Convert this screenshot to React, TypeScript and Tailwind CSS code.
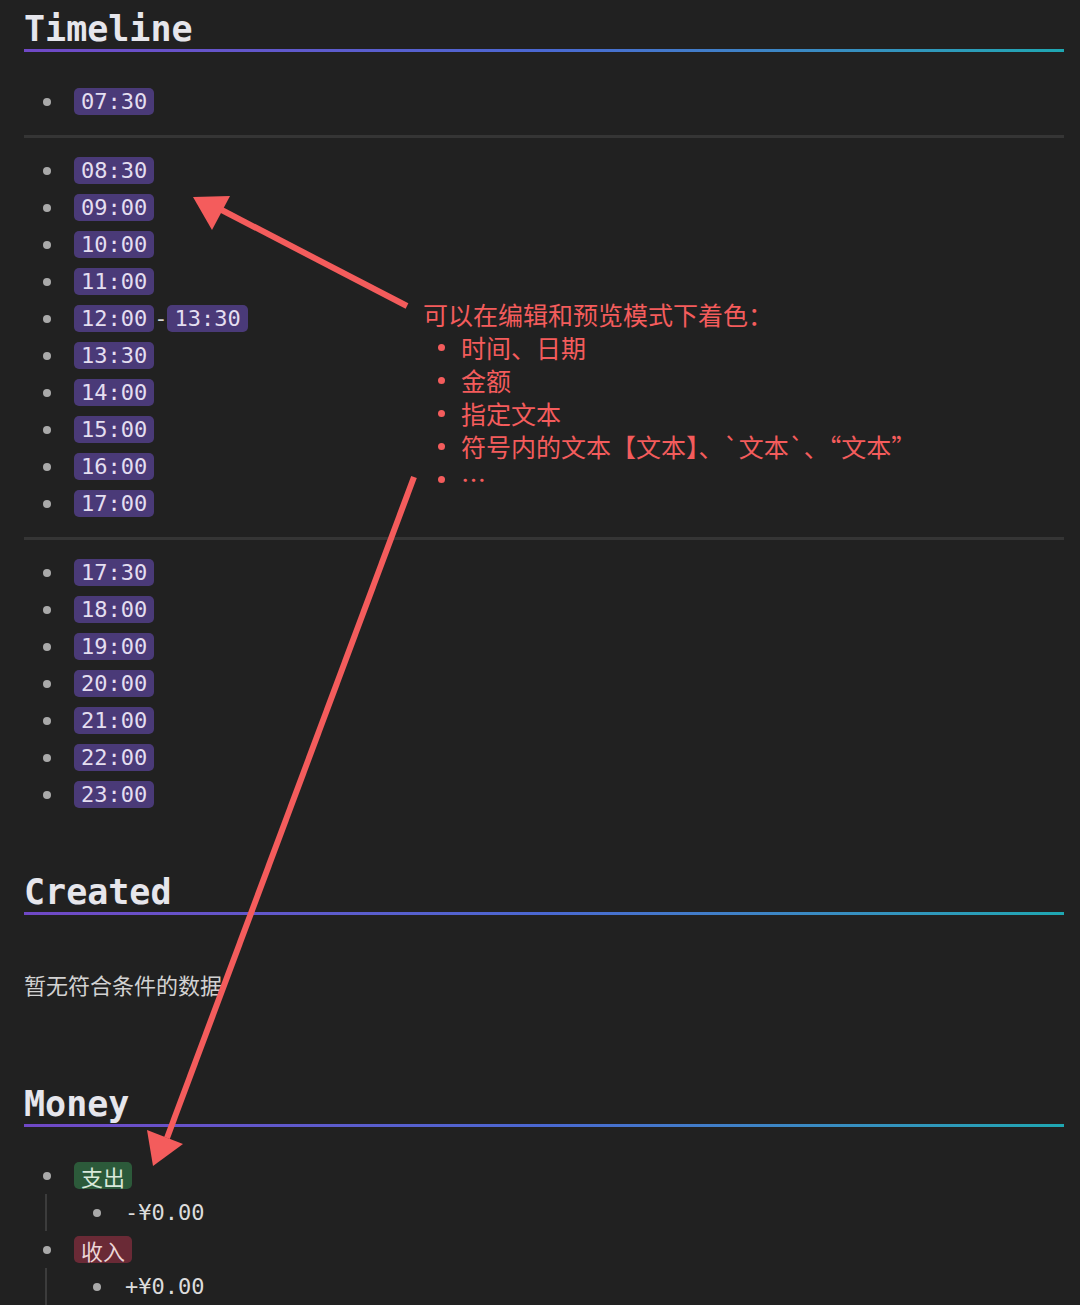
import React from "react";

const mono = { fontFamily: '"DejaVu Sans Mono", "Liberation Mono", "Noto Sans CJK SC", monospace' };
const cjk = { fontFamily: '"Noto Sans CJK SC", "Noto Sans", sans-serif' };

function Heading({ text }: { text: string }) {
  return (
    <div className="pt-[9px]">
      <div className="text-[35px] leading-[40px] font-bold text-[#e6e6ec]" style={mono}>
        {text}
      </div>
      <div className="h-[3px] w-full bg-linear-to-r from-[#7048c6] via-[#4a68d2] to-[#1ea7b2]" />
    </div>
  );
}

function Dot() {
  return <span className="ml-[19px] mr-[23px] h-2 w-2 shrink-0 rounded-full bg-[#a9a9a9]" />;
}

function Badge({ children, cls }: { children: React.ReactNode; cls: string }) {
  return (
    <span
      className={"inline-flex h-[27px] items-center rounded-[5px] px-[7px] text-[22px] leading-none " + cls}
      style={mono}
    >
      {children}
    </span>
  );
}

function TimeRow({ t, t2 }: { t: string; t2?: string }) {
  return (
    <div className="flex h-[37px] items-center">
      <Dot />
      <Badge cls="bg-[#4a3a78] text-[#e4def0]">{t}</Badge>
      {t2 && (
        <>
          <span className="text-[22px] leading-none text-[#d6d6d6]" style={mono}>-</span>
          <Badge cls="bg-[#4a3a78] text-[#e4def0]">{t2}</Badge>
        </>
      )}
    </div>
  );
}

function Hr() {
  return <div className="mt-[15px] mb-[14px] h-[3px] w-full bg-[#353535]" />;
}

export default function App() {
  const group2 = ["08:30", "09:00", "10:00", "11:00"];
  const group2b = ["13:30", "14:00", "15:00", "16:00", "17:00"];
  const group3 = ["17:30", "18:00", "19:00", "20:00", "21:00", "22:00", "23:00"];
  return (
    <div className="relative min-h-[1305px] w-full overflow-hidden bg-[#212121]">
      <div className="px-[24px] pr-[16px]">
        <Heading text="Timeline" />
        <div className="mt-[31px]">
          <TimeRow t="07:30" />
        </div>
        <Hr />
        <div>
          {group2.map((t) => (
            <TimeRow key={t} t={t} />
          ))}
          <TimeRow t="12:00" t2="13:30" />
          {group2b.map((t) => (
            <TimeRow key={t} t={t} />
          ))}
        </div>
        <Hr />
        <div>
          {group3.map((t) => (
            <TimeRow key={t} t={t} />
          ))}
        </div>

        <div className="mt-[50px]">
          <Heading text="Created" />
        </div>
        <div className="mt-[53px] text-[22px] leading-[32px] text-[#d2d2d2]" style={cjk}>
          暂无符合条件的数据
        </div>

        <div className="mt-[75px]">
          <Heading text="Money" />
        </div>
        <div className="mt-[30px]">
          <div className="flex h-[37px] items-center">
            <Dot />
            <Badge cls="bg-[#2c5a3a] text-[#d9e8da]">
              <span style={cjk}>支出</span>
            </Badge>
          </div>
          <div className="ml-[21px] border-l-2 border-[#3c3c3c]">
            <div className="flex h-[37px] items-center">
              <span className="ml-[46px] mr-[24px] h-2 w-2 shrink-0 rounded-full bg-[#a9a9a9]" />
              <span className="text-[22px] leading-none text-[#dcdcdc]" style={mono}>-¥0.00</span>
            </div>
          </div>
          <div className="flex h-[37px] items-center">
            <Dot />
            <Badge cls="bg-[#6a2a36] text-[#ecd6d8]">
              <span style={cjk}>收入</span>
            </Badge>
          </div>
          <div className="ml-[21px] border-l-2 border-[#3c3c3c]">
            <div className="flex h-[37px] items-center">
              <span className="ml-[46px] mr-[24px] h-2 w-2 shrink-0 rounded-full bg-[#a9a9a9]" />
              <span className="text-[22px] leading-none text-[#dcdcdc]" style={mono}>+¥0.00</span>
            </div>
          </div>
        </div>
      </div>

      {/* annotation */}
      <div
        className="absolute left-[423px] top-[298px] text-[25px] leading-[33px] text-[#f45c5c]"
        style={cjk}
      >
        <div>可以在编辑和预览模式下着色：</div>
        {["时间、日期", "金额", "指定文本", "符号内的文本【文本】、`文本`、“文本”", "…"].map((s) => (
          <div key={s} className="flex items-center">
            <span className="ml-[15px] mr-[16px] h-[7px] w-[7px] shrink-0 rounded-full bg-[#f45c5c]" />
            <span>{s}</span>
          </div>
        ))}
      </div>

      <svg className="pointer-events-none absolute left-0 top-0" width="1080" height="1305">
        <line x1="407" y1="306" x2="214" y2="206" stroke="#f45c5c" strokeWidth="6" />
        <polygon points="193,197 230,196 212,230" fill="#f45c5c" />
        <line x1="414" y1="477" x2="167" y2="1138" stroke="#f45c5c" strokeWidth="6" />
        <polygon points="153,1166 147,1130 183,1144" fill="#f45c5c" />
      </svg>
    </div>
  );
}
